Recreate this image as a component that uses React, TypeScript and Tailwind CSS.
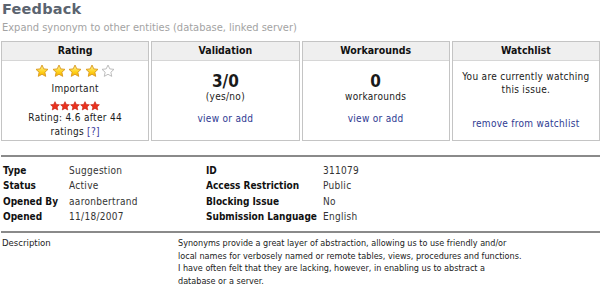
import React from "react";

const F = { fontFamily: '"DejaVu Sans Condensed", "DejaVu Sans", sans-serif', fontStretch: "condensed" as const };
const R = { fontFamily: '"DejaVu Sans", sans-serif', fontStretch: "normal" as const };

function GoldStar({ empty }: { empty?: boolean }) {
  return (
    <svg width="14" height="14" viewBox="0 0 24 24" className="block">
      <defs>
        <linearGradient id="gs" x1="0" y1="0" x2="0" y2="1">
          <stop offset="0" stopColor="#fff7a0" />
          <stop offset="0.6" stopColor="#ffd21a" />
          <stop offset="1" stopColor="#f5b000" />
        </linearGradient>
      </defs>
      <path
        d="M12 1.8l3.1 6.6 7.2.8-5.4 4.9 1.5 7.1L12 17.6l-6.4 3.6 1.5-7.1-5.4-4.9 7.2-.8z"
        fill={empty ? "#ffffff" : "url(#gs)"}
        stroke={empty ? "#b8b8b8" : "#d99a20"}
        strokeWidth="1.6"
        strokeLinejoin="round"
      />
    </svg>
  );
}

function RedStar() {
  return (
    <svg width="10" height="10" viewBox="0 0 24 24" className="block">
      <path
        d="M12 1.5l3.2 6.7 7.3.9-5.4 5 1.5 7.3L12 17.7l-6.6 3.7 1.5-7.3-5.4-5 7.3-.9z"
        fill="#e8321e"
        stroke="#c81e10"
        strokeWidth="1.5"
        strokeLinejoin="round"
      />
    </svg>
  );
}

function Box({ title, children }: { title: string; children: React.ReactNode }) {
  return (
    <div className="flex-1 border border-[#c4c4c4] bg-white flex flex-col">
      <div className="h-[19px] bg-[#efefef] border-b border-[#d6d6d6] flex items-center justify-center text-[10.5px] font-bold text-[#111]">
        {title}
      </div>
      <div className="flex-1 flex flex-col items-center text-center">{children}</div>
    </div>
  );
}

export default function App() {
  return (
    <div className="w-[601px] h-[294px] bg-white overflow-hidden text-[#1a1a1a]" style={F}>
      <div className="pl-[2px] pt-[1px]">
        <div className="text-[14.5px] font-bold text-[#5b6470] leading-[17px] tracking-[0.2px]" style={R}>
          Feedback
        </div>
        <div className="text-[11px] text-[#a3a3a3] leading-[15px] mt-[2px]">
          Expand synonym to other entities (database, linked server)
        </div>
      </div>

      <div className="mt-[6px] flex gap-[2px] px-[1px] h-[100px]">
        <Box title="Rating">
          <div className="flex gap-[2.5px] mt-[3px]">
            <GoldStar />
            <GoldStar />
            <GoldStar />
            <GoldStar />
            <GoldStar empty />
          </div>
          <div className="text-[10px] leading-[12px] mt-[5px] tracking-[0.3px]">Important</div>
          <div className="flex gap-0 mt-[6px]">
            <RedStar />
            <RedStar />
            <RedStar />
            <RedStar />
            <RedStar />
          </div>
          <div className="text-[10px] leading-[14px] tracking-[0.3px] mt-[0px]">
            Rating: 4.6 after 44
            <br />
            ratings <span className="text-[#3a3a9a]">[?]</span>
          </div>
        </Box>
        <Box title="Validation">
          <div className="text-[17px] font-bold leading-[18px] mt-[11px]">3/0</div>
          <div className="text-[10px] leading-[13px] tracking-[0.3px]">(yes/no)</div>
          <div className="text-[10px] leading-[13px] tracking-[0.3px] mt-[9px] text-[#2e3a92]">view or add</div>
        </Box>
        <Box title="Workarounds">
          <div className="text-[17px] font-bold leading-[18px] mt-[11px]">0</div>
          <div className="text-[10px] leading-[13px] tracking-[0.3px]">workarounds</div>
          <div className="text-[10px] leading-[13px] tracking-[0.3px] mt-[9px] text-[#2e3a92]">view or add</div>
        </Box>
        <Box title="Watchlist">
          <div className="text-[10px] leading-[13px] tracking-[0.3px] mt-[9px]">
            You are currently watching
            <br />
            this issue.
          </div>
          <div className="text-[10px] leading-[13px] tracking-[0.3px] mt-[21px] text-[#2e3a92]">
            remove from watchlist
          </div>
        </Box>
      </div>

      <div className="mt-[14px] h-[2px] bg-[#8a8a8a] mx-[1px]" />

      <div className="mt-[6px] grid grid-cols-[66px_137px_117px_1fr] pl-[3px] text-[10px] leading-[15.3px]">
        <div className="font-bold text-[#111]">Type</div>
        <div className="text-[#333] tracking-[0.3px]">Suggestion</div>
        <div className="font-bold text-[#111]">ID</div>
        <div className="text-[#333] tracking-[0.3px]">311079</div>
        <div className="font-bold text-[#111]">Status</div>
        <div className="text-[#333] tracking-[0.3px]">Active</div>
        <div className="font-bold text-[#111]">Access Restriction</div>
        <div className="text-[#333] tracking-[0.3px]">Public</div>
        <div className="font-bold text-[#111]">Opened By</div>
        <div className="text-[#333] tracking-[0.3px]">aaronbertrand</div>
        <div className="font-bold text-[#111]">Blocking Issue</div>
        <div className="text-[#333] tracking-[0.3px]">No</div>
        <div className="font-bold text-[#111]">Opened</div>
        <div className="text-[#333] tracking-[0.3px]">11/18/2007</div>
        <div className="font-bold text-[#111] whitespace-nowrap">Submission Language</div>
        <div className="text-[#333] tracking-[0.3px]">English</div>
      </div>

      <div className="mt-[7px] h-[2px] bg-[#8a8a8a] mx-[1px]" />

      <div className="mt-[4px] flex pl-[2px] text-[9px] leading-[12.5px] text-[#222]">
        <div className="w-[176px] text-[9.5px]">Description</div>
        <div className="whitespace-nowrap">
          Synonyms provide a great layer of abstraction, allowing us to use friendly and/or
          <br />
          local names for verbosely named or remote tables, views, procedures and functions.
          <br />
          I have often felt that they are lacking, however, in enabling us to abstract a
          <br />
          database or a server.
        </div>
      </div>
    </div>
  );
}
